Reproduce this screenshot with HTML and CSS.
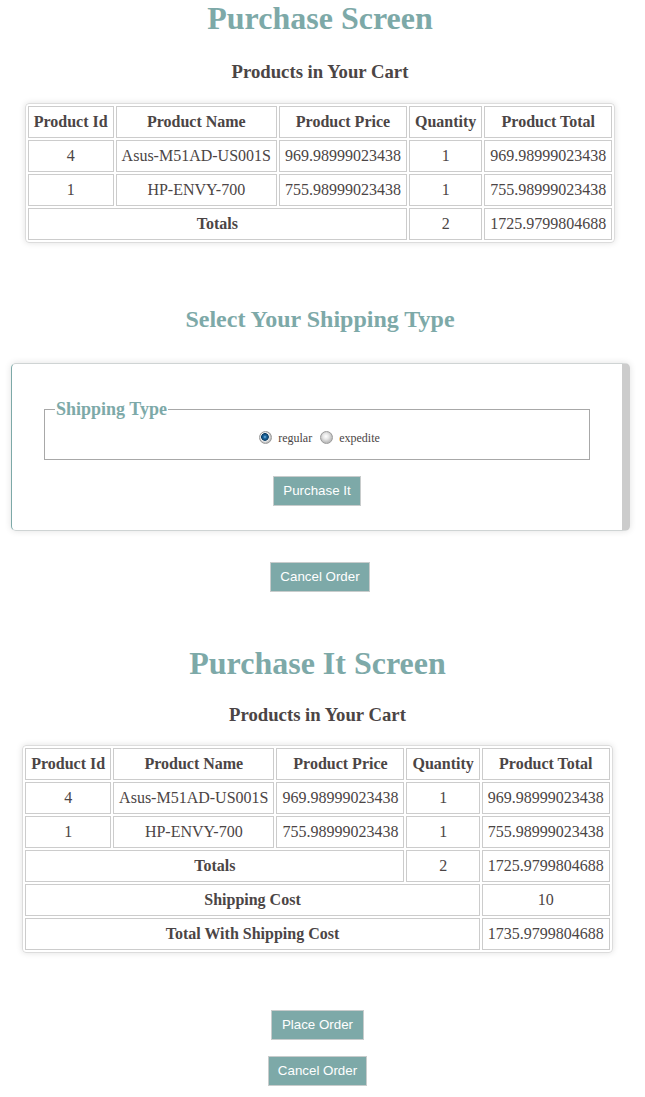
FILE: index.html
```html
<!DOCTYPE html>
<html>
<head>
<meta charset="utf-8">
<title>Purchase Screen</title>
<link rel="stylesheet" href="styles.css">
</head>
<body>
<div class="screen screen-one">
  <h1 class="title">Purchase Screen</h1>
  <h3 class="subtitle">Products in Your Cart</h3>
  <table class="cart">
    <tr><th>Product Id</th><th>Product Name</th><th>Product Price</th><th>Quantity</th><th>Product Total</th></tr>
    <tr><td>4</td><td>Asus-M51AD-US001S</td><td>969.98999023438</td><td>1</td><td>969.98999023438</td></tr>
    <tr><td>1</td><td>HP-ENVY-700</td><td>755.98999023438</td><td>1</td><td>755.98999023438</td></tr>
    <tr><th colspan="3">Totals</th><td>2</td><td>1725.9799804688</td></tr>
  </table>
  <h2 class="section-title">Select Your Shipping Type</h2>
  <div class="panel">
    <fieldset class="ship">
      <legend>Shipping Type</legend>
      <div class="options"><input type="radio" name="ship" checked> regular <input type="radio" name="ship"> expedite</div>
    </fieldset>
    <div class="btn-row"><button class="btn btn-narrow">Purchase It</button></div>
  </div>
  <div class="btn-row cancel-one"><button class="btn btn-narrow">Cancel Order</button></div>
</div>
<div class="screen screen-two">
  <h1 class="title">Purchase It Screen</h1>
  <h3 class="subtitle sub-two">Products in Your Cart</h3>
  <table class="cart cart-two">
    <tr><th>Product Id</th><th>Product Name</th><th>Product Price</th><th>Quantity</th><th>Product Total</th></tr>
    <tr><td>4</td><td>Asus-M51AD-US001S</td><td>969.98999023438</td><td>1</td><td>969.98999023438</td></tr>
    <tr><td>1</td><td>HP-ENVY-700</td><td>755.98999023438</td><td>1</td><td>755.98999023438</td></tr>
    <tr><th colspan="3">Totals</th><td>2</td><td>1725.9799804688</td></tr>
    <tr><th colspan="4">Shipping Cost</th><td>10</td></tr>
    <tr><th colspan="4">Total With Shipping Cost</th><td>1735.9799804688</td></tr>
  </table>
  <div class="btn-row place"><button class="btn">Place Order</button></div>
  <div class="btn-row cancel-two"><button class="btn btn-narrow">Cancel Order</button></div>
</div>
</body>
</html>
```
FILE: styles.css
```css
html, body {
  margin: 0;
  padding: 0;
  background: #ffffff;
}
body {
  font-family: "Liberation Serif", "Times New Roman", serif;
  color: #4b4545;
}
.screen {
  box-sizing: border-box;
}
.screen-one {
  width: 640px;
  padding-bottom: 53px;
}
.screen-two {
  width: 635px;
  padding-bottom: 11px;
}
.title {
  margin: 0;
  font-size: 32px;
  line-height: 37px;
  font-weight: bold;
  text-align: center;
  color: #7da9a8;
}
.subtitle {
  margin: 24px 0 20px;
  font-size: 18.72px;
  line-height: 22px;
  font-weight: bold;
  text-align: center;
  color: #4b4545;
}
.sub-two {
  margin: 22px 0 19px;
}
.cart {
  margin: 0 auto;
  border: 1px solid #dcdcdc;
  border-radius: 4px;
  border-spacing: 2px;
  box-shadow: 0 0 6px rgba(0, 0, 0, 0.12);
  font-size: 16px;
  line-height: 18px;
}
.cart th, .cart td {
  border: 1px solid #cccccc;
  padding: 6px 5px;
  text-align: center;
  white-space: nowrap;
}
.cart th {
  font-weight: bold;
}
.section-title {
  margin: 62px 0 30px;
  font-size: 24px;
  line-height: 28px;
  font-weight: bold;
  text-align: center;
  color: #7da9a8;
}
.panel {
  margin: 0 10px 0 11px;
  border: 1px solid #cfd4d4;
  border-left-color: #7da9a8;
  border-right: 8px solid #cccccc;
  border-radius: 5px;
  box-shadow: 0 0 7px rgba(0, 0, 0, 0.12);
  padding: 35px 32px 24px;
}
.ship {
  margin: 0;
  border: 1px solid #a8a8a8;
  padding: 8px 12px 14px;
}
.ship legend {
  padding: 0 1px;
  margin-left: -2px;
  font-size: 18px;
  line-height: 21px;
  font-weight: bold;
  color: #7da9a8;
}
.options {
  text-align: center;
  font-size: 12px;
  line-height: 14px;
}
.options input {
  -webkit-appearance: none;
  appearance: none;
  box-sizing: border-box;
  width: 13px;
  height: 13px;
  margin: 3px 3px 0 5px;
  vertical-align: -2px;
  border: 1px solid #9a9a9a;
  border-radius: 50%;
  background: radial-gradient(circle at 45% 40%, #ffffff 0, #e6e6e6 3px, #bdbdbd 6px);
}
.options input:checked {
  background: radial-gradient(circle at 45% 45%, #7fc0ea 0, #1f6aa3 1.5px, #0d3f66 3.5px, #f2f2f2 4.2px, #d4d4d4 5px, #b0b0b0 6.5px);
}
.btn-row {
  display: flex;
  justify-content: center;
}
.panel .btn-row {
  margin-top: 16px;
}
.btn {
  font-family: "Liberation Sans", Arial, sans-serif;
  font-size: 13.33px;
  line-height: 14px;
  color: #ffffff;
  background: #7da9a8;
  border: 1px solid #c8cccc;
  padding: 7px 10px;
  margin: 0;
  cursor: pointer;
}
.btn-narrow {
  padding: 7px 9px;
}
.cancel-one {
  margin-top: 31px;
}
.place {
  margin-top: 57px;
}
.cancel-two {
  margin-top: 16px;
}
```
